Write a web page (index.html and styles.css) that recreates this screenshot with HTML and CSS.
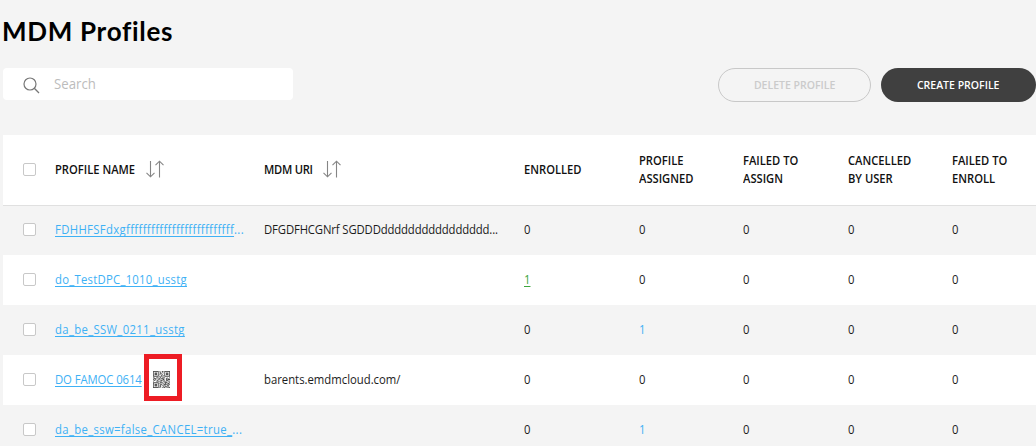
FILE: index.html
```html
<!DOCTYPE html>
<html lang="en">
<head>
<meta charset="utf-8">
<title>MDM Profiles</title>
<link rel="stylesheet" href="styles.css">
</head>
<body>
<svg class="defs" width="0" height="0" aria-hidden="true">
  <symbol id="sort" viewBox="0 0 20 18"><path d="M5.5 1V16.5M1.5 12.8L5.5 16.8L9.500 12.800M14.500 17.500V2M10.500 5.200L14.500 1.200L18.500 5.200" fill="none" stroke="#858585" stroke-width="1.100"/></symbol>
</svg>
<main class="page">
  <h1 class="title">MDM Profiles</h1>
  <div class="toolbar">
    <label class="search">
      <svg class="search-icon" viewBox="0 0 17 17"><circle cx="7" cy="7" r="6" fill="none" stroke="#777" stroke-width="1.200"/><path d="M11.300 11.300L16 16" stroke="#777" stroke-width="1.300"/></svg>
      <span class="placeholder">Search</span>
    </label>
    <div class="actions">
      <button class="btn btn-delete"><span>DELETE PROFILE</span></button>
      <button class="btn btn-create"><span>CREATE PROFILE</span></button>
    </div>
  </div>
  <section class="table">
    <div class="row head">
      <i class="check"></i>
      <div class="sortable name-head"><span class="h">PROFILE NAME</span><svg class="sort"><use href="#sort"/></svg></div>
      <div class="sortable uri-head"><span class="h">MDM URI</span><svg class="sort"><use href="#sort"/></svg></div>
      <span class="h">ENROLLED</span>
      <span class="h">PROFILE<br>ASSIGNED</span>
      <span class="h">FAILED TO<br>ASSIGN</span>
      <span class="h">CANCELLED<br>BY USER</span>
      <span class="h">FAILED TO<br>ENROLL</span>
    </div>
    <div class="row">
      <i class="check"></i>
      <span class="t blue wide"><a class="link">FDHHFSFdxgffffffffffffffffffffffffff</a>...</span>
      <span class="t tight">DFGDFHCGNrf SGDDDdddddddddddddddd...</span>
      <span class="t">0</span><span class="t">0</span><span class="t">0</span><span class="t">0</span><span class="t">0</span>
    </div>
    <div class="row">
      <i class="check"></i>
      <span class="t blue mid"><a class="link">do_TestDPC_1010_usstg</a></span>
      <span class="t"></span>
      <span class="t green"><a class="link">1</a></span><span class="t">0</span><span class="t">0</span><span class="t">0</span><span class="t">0</span>
    </div>
    <div class="row">
      <i class="check"></i>
      <span class="t blue wide"><a class="link">da_be_SSW_0211_usstg</a></span>
      <span class="t"></span>
      <span class="t">0</span><span class="t blue">1</span><span class="t">0</span><span class="t">0</span><span class="t">0</span>
    </div>
    <div class="row">
      <i class="check"></i>
      <div class="name-cell">
        <span class="t blue snug"><a class="link">DO FAMOC 0614</a></span>
        <div class="callout">
          <svg class="qr" viewBox="0 0 21 21"><path fill="none" stroke="#222" d="M0 .5h7m1 0h1m2 0h2m1 0h7M0 1.500h1m5 0h1m2 0h1m1 0h1m2 0h1m5 0h1M0 2.500h1m1 0h3m1 0h1m1 0h2m2 0h1m1 0h1m1 0h3m1 0h1M0 3.500h1m1 0h3m1 0h1m2 0h2m3 0h1m1 0h3m1 0h1M0 4.500h1m1 0h3m1 0h1m1 0h1m2 0h1m2 0h1m1 0h3m1 0h1M0 5.500h1m5 0h1m3 0h1m1 0h1m1 0h1m5 0h1M0 6.500h7m1 0h1m1 0h1m1 0h1m1 0h7M8 7.500h2m1 0h1M0 8.500h2m2 0h3m2 0h1m2 0h3m2 0h1m2 0h1M1 9.500h3m3 0h2m1 0h3m3 0h2m1 0h1M0 10.500h1m2 0h1m2 0h1m1 0h1m3 0h2m2 0h1m1 0h3M1 11.500h2m2 0h1m3 0h3m1 0h1m2 0h3M0 12.500h1m3 0h4m2 0h1m2 0h2m3 0h1m1 0h1M8 13.500h2m2 0h1m2 0h2m2 0h1M0 14.500h7m2 0h3m2 0h4m2 0h1M0 15.500h1m5 0h1m1 0h1m3 0h1m2 0h1m2 0h2M0 16.500h1m1 0h3m1 0h1m2 0h2m2 0h4m1 0h1m1 0h1M0 17.500h1m1 0h3m1 0h1m1 0h2m1 0h1m2 0h1m2 0h3M0 18.500h1m1 0h3m1 0h1m2 0h1m2 0h2m1 0h1m2 0h1M0 19.500h1m5 0h1m1 0h2m3 0h1m1 0h3m1 0h1M0 20.500h7m1 0h1m2 0h1m1 0h2m2 0h1m1 0h2"/></svg>
        </div>
      </div>
      <span class="t">barents.emdmcloud.com/</span>
      <span class="t">0</span><span class="t">0</span><span class="t">0</span><span class="t">0</span><span class="t">0</span>
    </div>
    <div class="row">
      <i class="check"></i>
      <span class="t blue wide"><a class="link">da_be_ssw=false_CANCEL=true_</a>...</span>
      <span class="t"></span>
      <span class="t">0</span><span class="t blue">1</span><span class="t">0</span><span class="t">0</span><span class="t">0</span>
    </div>
  </section>
</main>
</body>
</html>
```
FILE: styles.css
```css
* { box-sizing: border-box; }
body {
  margin: 0;
  height: 446px;
  overflow: hidden;
  background: #f4f4f4;
  color: #1c1c1c;
  font-family: "Open Sans", "Noto Sans", sans-serif;
}
.defs { display: none; }
.page { padding: 13px 0 0 2px; }
.title {
  margin: 0;
  height: 55px;
  font: 700 26px/36px Lato, sans-serif;
  letter-spacing: .7px;
  color: #000;
}
.toolbar, .table { margin-left: 1px; }
.toolbar { display: flex; justify-content: space-between; height: 67px; }
.search {
  display: flex;
  align-items: center;
  gap: 14px;
  width: 290px;
  height: 32px;
  padding-left: 20px;
  border-radius: 4px;
  background: #fff;
}
.search-icon { width: 17px; height: 17px; margin-top: 2px; }
.placeholder {
  margin-bottom: 2px;
  font-size: 15px;
  line-height: 20px;
  color: #bcbcbc;
  transform: scaleX(.88);
  transform-origin: left;
}
.actions { display: flex; gap: 10px; }
.btn {
  height: 34px;
  padding: 0;
  border-radius: 17px;
  font: 600 11px/16px "Open Sans", sans-serif;
}
.btn span { display: inline-block; transform: scaleX(.955); }
.btn-delete { width: 153px; border: 1px solid #c8c8c8; background: transparent; color: #cbcbcb; }
.btn-create { width: 155px; border: 0; background: #404040; color: #fff; }
.row {
  display: grid;
  grid-template-columns: 32px 209px 260px 115px 104px 104.500px 104.500px 84px;
  align-items: center;
  height: 50px;
  padding: 0 0 2px 20px;
  overflow: hidden;
}
.row:nth-child(odd) { background: #fff; }
.row.head { height: 71px; border-bottom: 1px solid #e0e0e0; }
.row.head + .row { height: 49px; padding-bottom: 3px; }
.check {
  width: 13px;
  height: 13px;
  border: 1px solid #c8c8c8;
  border-radius: 2px;
  background: #fff;
}
.h {
  font-size: 13px;
  font-weight: 600;
  line-height: 18px;
  color: #111;
  white-space: nowrap;
  transform: scaleX(.86);
  transform-origin: left;
}
.sortable { display: flex; align-items: center; }
.name-head .h { width: 90px; }
.uri-head .h { width: 58px; letter-spacing: -.3px; }
.sort { width: 20px; height: 18px; }
.t {
  font-size: 13px;
  line-height: 18px;
  white-space: nowrap;
  transform: scaleX(.87);
  transform-origin: left;
}
.blue { color: #3eb1f5; }
.green { color: #3da53d; }
.wide { letter-spacing: .4px; }
.mid { letter-spacing: .3px; }
.snug { letter-spacing: -.1px; }
.tight { letter-spacing: -.15px; }
.link {
  text-decoration: underline;
  text-decoration-thickness: 1px;
  text-underline-offset: 2px;
  text-decoration-skip-ink: none;
}
.name-cell { position: relative; display: flex; align-items: center; height: 48px; }
.callout {
  position: absolute;
  left: 89px;
  top: -1px;
  display: flex;
  align-items: center;
  justify-content: center;
  width: 38px;
  height: 47px;
  padding-top: 4px;
  padding-right: 4px;
  border: 5px solid #ed1c24;
  background: #fff;
}
.row:has(.callout) { overflow: visible; }
.qr { flex: none; width: 17px; height: 17px; }
```
